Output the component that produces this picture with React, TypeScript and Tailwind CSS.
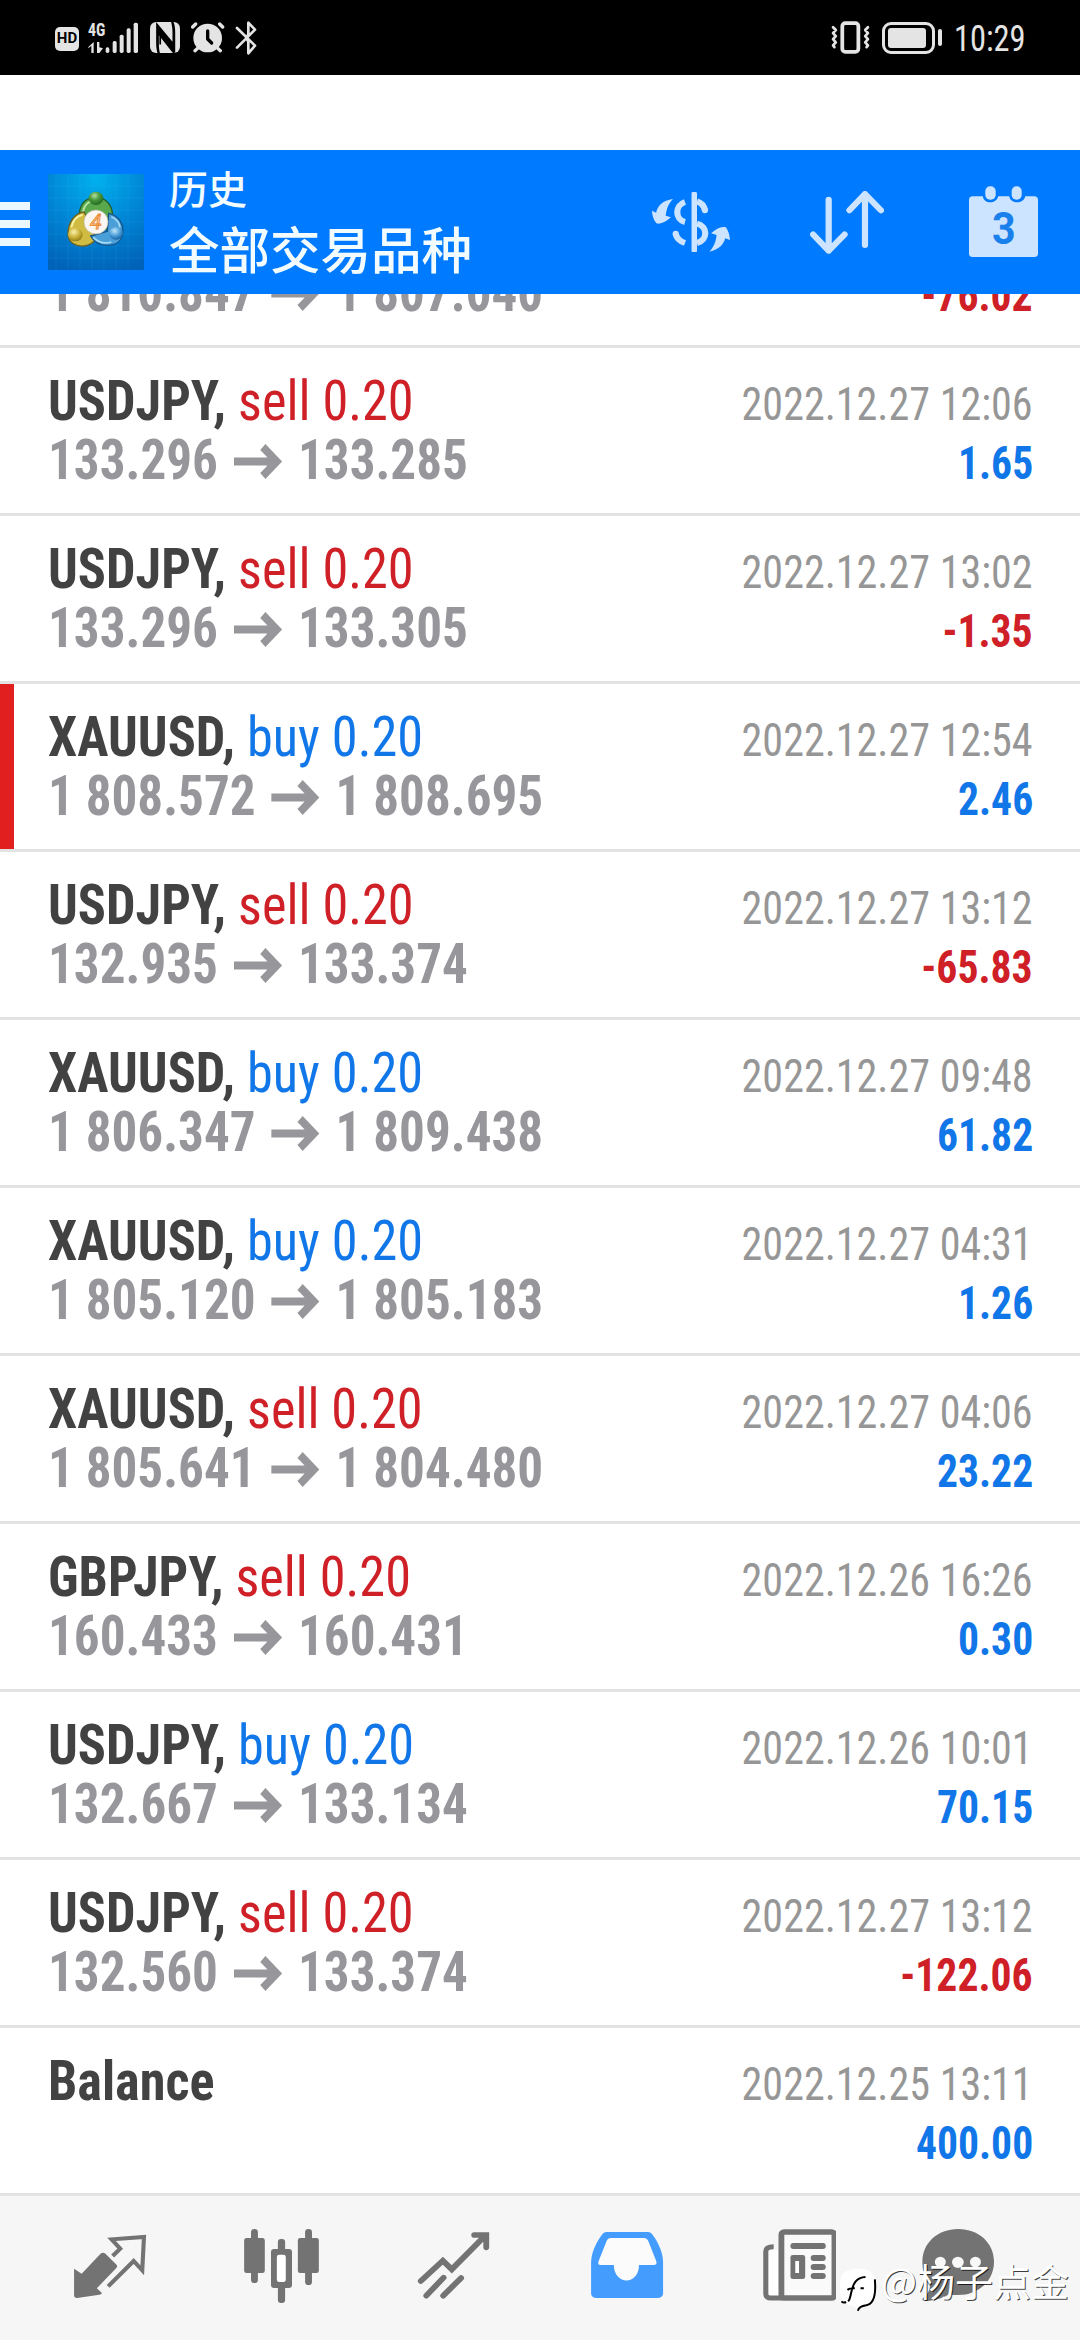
import React from 'react';

type Deal = {
  symbol: string;
  side?: 'buy' | 'sell';
  from?: string;
  to?: string;
  time: string;
  profit: string;
  marked?: boolean;
};

const deals: Deal[] = [
  { symbol: 'USDJPY', side: 'sell', from: '133.296', to: '133.285', time: '2022.12.27 12:06', profit: '1.65' },
  { symbol: 'USDJPY', side: 'sell', from: '133.296', to: '133.305', time: '2022.12.27 13:02', profit: '-1.35' },
  { symbol: 'XAUUSD', side: 'buy', from: '1 808.572', to: '1 808.695', time: '2022.12.27 12:54', profit: '2.46', marked: true },
  { symbol: 'USDJPY', side: 'sell', from: '132.935', to: '133.374', time: '2022.12.27 13:12', profit: '-65.83' },
  { symbol: 'XAUUSD', side: 'buy', from: '1 806.347', to: '1 809.438', time: '2022.12.27 09:48', profit: '61.82' },
  { symbol: 'XAUUSD', side: 'buy', from: '1 805.120', to: '1 805.183', time: '2022.12.27 04:31', profit: '1.26' },
  { symbol: 'XAUUSD', side: 'sell', from: '1 805.641', to: '1 804.480', time: '2022.12.27 04:06', profit: '23.22' },
  { symbol: 'GBPJPY', side: 'sell', from: '160.433', to: '160.431', time: '2022.12.26 16:26', profit: '0.30' },
  { symbol: 'USDJPY', side: 'buy', from: '132.667', to: '133.134', time: '2022.12.26 10:01', profit: '70.15' },
  { symbol: 'USDJPY', side: 'sell', from: '132.560', to: '133.374', time: '2022.12.27 13:12', profit: '-122.06' },
  { symbol: 'Balance', time: '2022.12.25 13:11', profit: '400.00' },
];

const StatusBar = () => (
  <div className="flex h-[75px] items-center justify-between bg-black pl-[55px] pr-[55px] text-[#e4e4e4]">
    <div className="flex items-center">
      <div className="mt-0.5 flex h-6 w-6 items-center justify-center rounded-[5px] bg-[#e4e4e4] font-['Roboto',sans-serif] text-[15px] font-bold leading-none text-black">
        HD
      </div>
      <svg viewBox="115 22 153 96" className="ml-[9px] h-[32px] w-[51px]" fill="#e4e4e4">
        <text x="115" y="64" fontSize="54" fontWeight="700" textLength="52" lengthAdjust="spacingAndGlyphs" fontFamily="Roboto Condensed, sans-serif">4G</text>
        <path d="M116 97l16-15v33h-7V93l-9 8zM142 82v33h7l11-14-11-3V82z" />
        <rect x="168" y="98" width="11" height="17" rx="5" />
        <rect x="189" y="79" width="12" height="36" rx="5" />
        <rect x="210" y="60" width="12" height="55" rx="5" />
        <rect x="231" y="41" width="12" height="74" rx="5" />
        <rect x="252" y="24" width="13" height="91" rx="5" />
      </svg>
      <svg viewBox="300 24 88 91" className="ml-[11px] h-[31px] w-[30px]">
        <rect x="300" y="24" width="88" height="91" rx="18" fill="#e4e4e4" />
        <path d="M318 24l48 58V54c0-12-2-22-4-30h7c4 10 5 20 5 34v56l-7 1-41-52v24c0 12 1 20 3 28h-7c-3-9-4-19-4-30V24z" fill="black" />
        <path d="M330 42v48M332 58l34 42" stroke="black" strokeWidth="5" fill="none" />
      </svg>
      <svg viewBox="422 24 102 91" className="ml-[11px] h-[31px] w-[34px]" fill="none" stroke="#e4e4e4" strokeLinecap="round">
        <circle cx="472" cy="71" r="43" fill="#e4e4e4" stroke="none" />
        <path d="M427 38l9-9M517 38l-9-9M434 109l8-7M510 109l-8-7" strokeWidth="10" />
        <path d="M472 50v24l12 12" stroke="black" strokeWidth="10" strokeLinejoin="round" />
      </svg>
      <svg viewBox="554 18 64 102" className="ml-[10px] h-[34px] w-[22px]" fill="none" stroke="#e4e4e4" strokeWidth="8" strokeLinecap="round" strokeLinejoin="round">
        <path d="M559 98l54-54-20-21v34l-4 10M559 39l54 53-20 23V81l-4-10" />
      </svg>
    </div>
    <div className="flex items-center">
      <svg viewBox="0 0 114 96" className="h-[33px] w-[39px]" fill="none" stroke="#e4e4e4">
        <rect x="33" y="6" width="47" height="84" rx="9" strokeWidth="11" />
        <path d="M6 18l8 8-8 9 8 9-8 9 8 9-8 9 4 5M108 18l-8 8 8 9-8 9 8 9-8 9 8 9-4 5" strokeWidth="8" strokeLinecap="round" strokeLinejoin="round" />
      </svg>
      <div className="ml-3 flex h-8 w-[53px] rounded-[9px] border-[3px] border-[#e4e4e4] p-[3px]">
        <div className="h-full w-[38px] rounded-[3px] bg-[#e4e4e4]" />
      </div>
      <div className="ml-[3px] h-[17px] w-1 rounded-sm bg-[#e4e4e4]" />
      <span className="ml-3 mt-0.5 w-[71px] origin-left scale-x-[0.9] whitespace-nowrap font-['Roboto_Condensed','Roboto',sans-serif] text-[36px] leading-none">10:29</span>
    </div>
  </div>
);

const AppLogo = () => (
  <svg viewBox="24 24 288 288" className="h-24 w-24">
    <defs>
      <radialGradient id="sky" cx="50%" cy="5%" r="100%">
        <stop offset="0" stopColor="#00b0ee" />
        <stop offset="0.5" stopColor="#0086d6" />
        <stop offset="1" stopColor="#0062b8" />
      </radialGradient>
      <radialGradient id="green" cx="40%" cy="30%" r="75%">
        <stop offset="0" stopColor="#b4e0a0" />
        <stop offset="0.45" stopColor="#4a9a3c" />
        <stop offset="1" stopColor="#1d6420" />
      </radialGradient>
      <radialGradient id="yellow" cx="40%" cy="30%" r="75%">
        <stop offset="0" stopColor="#fbf3a8" />
        <stop offset="0.6" stopColor="#c4aa30" />
        <stop offset="1" stopColor="#8a761a" />
      </radialGradient>
      <radialGradient id="blue" cx="40%" cy="30%" r="75%">
        <stop offset="0" stopColor="#bfe6fb" />
        <stop offset="0.6" stopColor="#4096d2" />
        <stop offset="1" stopColor="#155c9c" />
      </radialGradient>
    </defs>
    <rect x="24" y="24" width="288" height="288" fill="url(#sky)" />
    <path d="M48 24v288M84 24v288M120 24v288M156 24v288M192 24v288M228 24v288M264 24v288M24 60h288M24 96h288M24 132h288M24 168h288M24 204h288M24 240h288M24 276h288" stroke="#4cc0f4" strokeOpacity="0.16" strokeWidth="2" />
    <path d="M118 148c0-36 22-54 50-54s50 22 50 58c0 20-8 32-16 38l-66-6c-10-8-18-18-18-36z" fill="#5aa84c" stroke="#235f2a" strokeWidth="4" />
    <path d="M128 146c2-26 16-42 38-42" fill="none" stroke="#b6e6a6" strokeWidth="6" />
    <path d="M132 138c-30 4-48 34-48 66 0 26 24 38 48 36 20-2 32-14 40-26z" fill="#d0bc42" stroke="#6d6420" strokeWidth="4" />
    <path d="M94 184c4-20 16-34 34-38" fill="none" stroke="#f8f0a0" strokeWidth="6" />
    <path d="M206 142c30 6 46 34 42 62-4 24-24 34-46 34-24 0-40-10-50-28l50-14z" fill="#4a9fd8" stroke="#165488" strokeWidth="4" />
    <path d="M160 214c14 14 34 20 54 14M214 152c14 6 24 18 26 32" fill="none" stroke="#a4daf6" strokeWidth="5" />
    <ellipse cx="168" cy="97" rx="22" ry="20" fill="url(#green)" />
    <ellipse cx="106" cy="206" rx="22" ry="20" fill="url(#yellow)" />
    <ellipse cx="228" cy="202" rx="21" ry="19" fill="url(#blue)" />
    <circle cx="168" cy="168" r="36" fill="#fbf6f2" stroke="#b9b6a4" strokeWidth="2" />
    <text x="168" y="189" textAnchor="middle" fontSize="62" fontStyle="italic" fontFamily="Roboto, sans-serif" fill="#ffd9a0" stroke="#ea8c3c" strokeWidth="3">4</text>
  </svg>
);

const Header = () => (
  <header className="flex h-36 items-center bg-[#007aff] pr-[42px]">
    <div className="mt-1 flex w-[30px] flex-col gap-2.5">
      <div className="h-2 bg-[#ebf8ff]" />
      <div className="h-2 bg-[#ebf8ff]" />
      <div className="h-2 bg-[#ebf8ff]" />
    </div>
    <div className="ml-[18px]">
      <AppLogo />
    </div>
    <div className="-mt-[9px] ml-[25px] flex-1 font-['Noto_Sans_CJK_SC',sans-serif] font-medium text-[#f2fcff]">
      <div className="text-[39px] leading-[58px]">历史</div>
      <div className="text-[50.500px] leading-[62px]">全部交易品种</div>
    </div>
    <svg viewBox="322 150 227 180" preserveAspectRatio="none" className="h-[60px] w-[78px]" fill="none" stroke="#cce4ff">
      <path d="M445 156v169" strokeWidth="16" strokeLinecap="round" />
      <path d="M418 180c-30 10-30 52 0 60M391 275c2 14 10 22 27 28" strokeWidth="18" />
      <path d="M391 275v1" strokeWidth="18" strokeLinecap="round" />
      <path d="M453 178c12 4 20 12 23 26" strokeWidth="18" />
      <path d="M476 204v1" strokeWidth="18" strokeLinecap="round" />
      <path d="M453 245c32 8 32 50 0 58" strokeWidth="18" />
      <path d="M383 171c-30 4-44 20-49 41l-12-6c0 14 5 28 13 38 14 4 28-6 42-18l-15-5c2-20 8-36 21-50z" fill="#cce4ff" stroke="none" />
      <path d="M489 329c28-6 42-22 46-40l14 5c-1-14-5-28-12-38-14-4-28 4-43 18l16 5c-2 20-8 36-21 50z" fill="#cce4ff" stroke="none" />
    </svg>
    <svg viewBox="782 150 214 190" preserveAspectRatio="none" className="ml-20 h-[63px] w-[74px]" fill="none" stroke="#cce4ff" strokeWidth="18" strokeLinecap="round" strokeLinejoin="round">
      <path d="M836 176v154M791 281l45 49 46-49M941 313V159M896 208l45-49 46 49" />
    </svg>
    <svg viewBox="1242 137 199 213" preserveAspectRatio="none" className="-mt-0.5 ml-[85px] h-[71px] w-[69px]">
      <path d="M1252 168h30c2 24 40 24 44 0h32c4 24 42 24 46 0h27c6 0 10 4 10 10v162c0 6-4 10-10 10h-179c-6 0-10-4-10-10V178c0-6 4-10 10-10z" fill="#cce4ff" />
      <rect x="1289" y="138" width="30" height="40" rx="14" fill="#cce4ff" />
      <rect x="1365" y="138" width="29" height="40" rx="14" fill="#cce4ff" />
      <text x="1342" y="311" textAnchor="middle" fontSize="132" fontWeight="700" textLength="68" lengthAdjust="spacingAndGlyphs" fontFamily="Roboto, sans-serif" fill="#1a80ec">3</text>
    </svg>
  </header>
);

const Prices = ({ from, to }: { from: string; to: string }) => (
  <div className="flex origin-left scale-x-[0.93] items-baseline whitespace-nowrap text-[55px] font-bold leading-[59px] text-[#97979b]">
    {from}
    <svg viewBox="0 0 52 35" className="mx-[17px] h-[35px] w-[52px] fill-none stroke-[#97979b] stroke-[8]">
      <path d="M0 17.500H46M31 3l15 14.500L31 32" />
    </svg>
    {to}
  </div>
);

const Profit = ({ value }: { value: string }) => (
  <span
    className={`origin-right scale-x-[0.915] text-[45.500px] font-bold leading-[52px] ${
      value.startsWith('-') ? 'text-[#cf2027]' : 'text-[#1177e8]'
    }`}
  >
    {value}
  </span>
);

const DealRow = ({ deal }: { deal: Deal }) => (
  <div className={`h-[168px] border-b-[3px] border-[#e3e3e3] pl-12 pr-[47px] pt-6 ${deal.marked ? 'bg-linear-to-r from-[#e11f1f] from-[14px] to-white to-[14px]' : ''}`}>
    <div className="flex h-[59px] items-baseline justify-between">
      <div className="origin-left scale-x-[0.95] whitespace-nowrap text-[55px] leading-[59px]">
        <span className="font-bold text-[#424242]">
          {deal.symbol}
          {deal.side && ','}
        </span>
        {deal.side && (
          <span className={deal.side === 'buy' ? 'text-[#1177e8]' : 'text-[#cf2027]'}> {deal.side} 0.20</span>
        )}
      </div>
      <span className="origin-right scale-x-[0.925] whitespace-nowrap text-[45.500px] leading-[52px] text-[#969696]">{deal.time}</span>
    </div>
    <div className="flex h-[59px] items-baseline justify-between">
      {deal.from && deal.to ? <Prices from={deal.from} to={deal.to} /> : <span className="text-[55px] leading-[59px]">&nbsp;</span>}
      <Profit value={deal.profit} />
    </div>
  </div>
);

const NavIcon = ({ viewBox, className = '', children }: { viewBox: string; className?: string; children: React.ReactNode }) => (
  <svg viewBox={viewBox} preserveAspectRatio="none" className={`h-[76px] w-[76px] ${className}`}>
    {children}
  </svg>
);

const BottomNav = () => (
  <nav className="relative flex h-[144px] gap-24 bg-[#f6f6f6] pl-[72px] pt-8 text-[#737373]">
    <NavIcon viewBox="209 174 220.700 228">
      <path d="M215 296l22 15 55-60c4-4 10-4 14 0l31 32c4 4 4 8 0 12l-56 60 15 14c-2 4-4 4-8 5l-64 10c-6 0-9-2-9-8z" fill="currentColor" />
      <path d="M327 258l22-22-25-28 94-7-5 100-25-28-74 76" fill="none" stroke="currentColor" strokeWidth="12" />
    </NavIcon>
    <NavIcon viewBox="708.600 174 220.700 228">
      <g fill="currentColor">
        <rect x="729" y="177" width="20" height="162" rx="10" />
        <rect x="709" y="204" width="60" height="105" rx="7" />
        <rect x="886" y="177" width="20" height="168" rx="10" />
        <rect x="865" y="204" width="61" height="105" rx="7" />
        <rect x="807" y="207" width="21" height="192" rx="9" />
        <rect x="787" y="237" width="61" height="117" rx="9" />
      </g>
      <rect x="804" y="254" width="26" height="82" rx="7" fill="#fff" />
    </NavIcon>
    <NavIcon viewBox="1207 174 220.700 228">
      <path d="M1221 333l64-61 26 26 98-102M1376 195h35v37M1237 377l50-54M1286 377l52-53" fill="none" stroke="currentColor" strokeWidth="17" strokeLinecap="round" strokeLinejoin="miter" />
    </NavIcon>
    <NavIcon viewBox="138 174 220.700 228">
      <path d="M192 186h120c6 0 10 4 14 9 18 26 30 54 30 83v92c0 8-6 14-14 14H161c-8 0-14-6-14-14v-92c0-29 13-57 31-83 4-5 8-9 14-9z" fill="#449cff" />
      <path d="M204 204h96c7 0 10 3 13 9l23 60c3 8 0 12-7 12h-43c0 62-72 62-73 0h-38c-7 0-9-4-6-12l23-60c3-6 6-9 12-9z" fill="#fbfbfb" />
    </NavIcon>
    <NavIcon viewBox="637 174 222 228">
      <path d="M677 230c-14 0-23 4-23 14v128c0 8 6 12 14 12h36" fill="#fff" stroke="currentColor" strokeWidth="15" />
      <rect x="663" y="240" width="28" height="135" rx="4" fill="#fff" />
      <rect x="699.500" y="186" width="155" height="198" rx="8" fill="#fafafa" stroke="currentColor" strokeWidth="17" />
      <g fill="currentColor">
        <rect x="726" y="219" width="103" height="18" rx="8" />
        <rect x="726" y="255" width="43" height="72" rx="7" />
        <rect x="785" y="255" width="44" height="18" rx="9" />
        <rect x="785" y="282" width="44" height="18" rx="9" />
        <rect x="785" y="309" width="44" height="18" rx="9" />
      </g>
      <rect x="740" y="273" width="11" height="36" fill="#fff" />
    </NavIcon>
    <NavIcon viewBox="1103 174 220.700 228" className="-ml-3">
      <path d="M1214 177c60 0 104 42 104 98s-44 100-104 100c-10 0-18 0-26-3-20 14-48 21-70 21-8-1-10-4-6-9 12-10 18-20 20-36-14-16-22-42-22-73 0-56 44-98 104-98z" fill="currentColor" />
      <g fill="#f8f8f8">
        <circle cx="1162" cy="276" r="16" />
        <circle cx="1213" cy="277" r="17" />
        <circle cx="1264" cy="276" r="16" />
      </g>
    </NavIcon>
    {/* author stamp over the right end of the bar */}
    <div className="absolute left-[840px] top-[52px] flex items-center">
      <svg viewBox="30 118 110 132" className="mt-5 h-11 w-[37px]">
        <path d="M34 142c6-16 28-22 56-22 36 0 46 20 46 52 0 30-8 52-30 56-12 2-20 8-24 20-4-12-10-18-20-18-28-4-34-30-34-58z" fill="#fff" />
        <path d="M134 152c4 44-2 74-26 78-14 2-22 6-25 16M54 218c6-6 6-14 9-26 6-26 14-46 43-47M52 184c4-4 10-5 22-5M91 179h10M34 218c4 4 10 4 14 2" fill="none" stroke="#000" strokeWidth="6" />
      </svg>
      <span className="ml-1 whitespace-nowrap font-['Noto_Sans_CJK_SC',sans-serif] text-[38px] font-normal leading-[48px] text-white [text-shadow:1px_1px_0_#000000c0]">@杨子点金</span>
    </div>
  </nav>
);

export default function App() {
  return (
    <div className="flex h-[2340px] w-[1080px] flex-col overflow-hidden bg-white font-['Roboto_Condensed','Roboto',sans-serif]">
      <StatusBar />
      <div className="h-[75px]" />
      <Header />
      {/* row scrolled half under the header */}
      <div className="flex h-[54px] flex-col justify-end overflow-hidden border-b-[3px] border-[#e3e3e3] pb-[23px] pl-12 pr-[47px]">
        <div className="flex h-[59px] shrink-0 items-baseline justify-between">
          <Prices from="1 810.847" to="1 807.040" />
          <Profit value="-76.02" />
        </div>
      </div>
      {deals.map((deal, i) => (
        <DealRow key={i} deal={deal} />
      ))}
      <BottomNav />
    </div>
  );
}
